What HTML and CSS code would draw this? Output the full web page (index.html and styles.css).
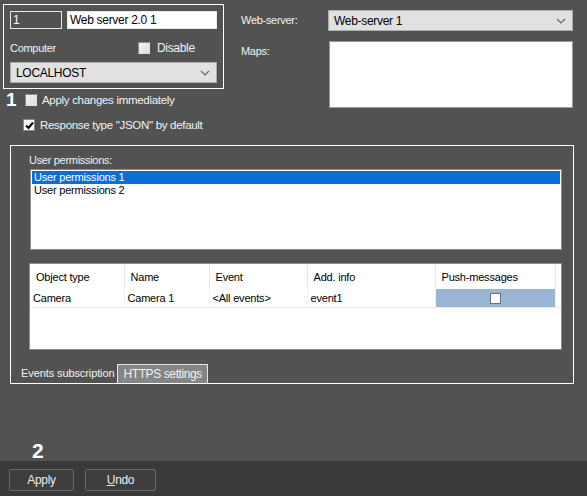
FILE: index.html
```html
<!DOCTYPE html>
<html lang="en">

<head>
    <meta charset="UTF-8">
    <title>Web server</title>
    <link rel="stylesheet" href="styles.css">
</head>

<body>

    <div class="content">
        <div class="top">
            <div class="left">
                <div class="server-box">
                    <div class="row">
                        <div class="field id-field">1</div>
                        <div class="field name-field">Web server 2.0 1</div>
                    </div>
                    <div class="row computer-row">
                        <span class="label">Computer</span>
                        <span class="check light"></span>
                        <span class="label">Disable</span>
                    </div>
                    <div class="select host-select">
                        <span>LOCALHOST</span>
                        <svg width="10" height="6" viewBox="0 0 10 6"><polyline points="1,1 5,5 9,1" fill="none" stroke="#666" stroke-width="1.2"/></svg>
                    </div>
                </div>

                <div class="check-row first">
                    <span class="marker">1</span>
                    <span class="check light"></span>
                    <span class="label">Apply changes immediately</span>
                </div>
                <div class="check-row second">
                    <span class="check checked">
                        <svg width="9" height="9" viewBox="0 0 9 9"><polyline points="1,4.5 3.5,7 8,1.5" fill="none" stroke="#000" stroke-width="2"/></svg>
                    </span>
                    <span class="label">Response type "JSON" by default</span>
                </div>
            </div>

            <div class="right">
                <span class="label">Web-server:</span>
                <div class="select server-select">
                    <span>Web-server 1</span>
                    <svg width="10" height="6" viewBox="0 0 10 6"><polyline points="1,1 5,5 9,1" fill="none" stroke="#666" stroke-width="1.2"/></svg>
                </div>
                <span class="label">Maps:</span>
                <div class="maps-box"></div>
            </div>
        </div>

        <div class="group">
            <div class="perm-label">User permissions:</div>
            <div class="listbox">
                <div class="list-item selected">User permissions 1</div>
                <div class="list-item">User permissions 2</div>
            </div>

            <div class="grid-box">
                <table>
                    <thead>
                        <tr>
                            <th class="c1">Object type</th>
                            <th class="c2">Name</th>
                            <th class="c3">Event</th>
                            <th class="c4">Add. info</th>
                            <th class="c5">Push-messages</th>
                            <th></th>
                        </tr>
                    </thead>
                    <tbody>
                        <tr>
                            <td>Camera</td>
                            <td>Camera 1</td>
                            <td>&lt;All events&gt;</td>
                            <td>event1</td>
                            <td class="push"><span class="cell-check"></span></td>
                            <td class="empty"></td>
                        </tr>
                    </tbody>
                </table>
            </div>

            <div class="tabs">
                <span class="tab">Events subscription</span>
                <span class="tab active">HTTPS settings</span>
            </div>
        </div>

        <div class="marker two">2</div>
    </div>

    <div class="footer">
        <button class="btn">Apply</button>
        <button class="btn undo"><u>U</u>ndo</button>
    </div>

</body>

</html>
```

FILE: styles.css
```css
* {
    margin: 0;
    padding: 0;
    box-sizing: border-box;
    font-family: 'Liberation Sans', Arial, sans-serif;
}

body {
    background-color: #525252;
    width: 587px;
    height: 496px;
    display: flex;
    flex-direction: column;
    color: #f2f2f2;
    font-size: 11px;
    letter-spacing: -0.3px;
    overflow: hidden;
}

.content {
    flex: 1;
    display: flex;
    flex-direction: column;
}

.top {
    display: flex;
}

.left {
    width: 221px;
    margin-left: 3px;
    margin-top: 4px;
}

.server-box {
    border: 1px solid #fff;
    height: 85px;
    padding: 6px 6px 0 6px;
}

.row {
    display: flex;
    align-items: center;
}

.field {
    height: 18px;
    border: 1px solid #e8e8e8;
    padding: 1px 2px 0;
    font-size: 12px;
}

.id-field {
    width: 52px;
    color: #fff;
}

.name-field {
    width: 150px;
    margin-left: 5px;
    background: #fff;
    color: #000;
}

.computer-row {
    margin-top: 13px;
    height: 12px;
}

.computer-row .check {
    margin-left: 82px;
    margin-right: 7px;
}

.computer-row .label:last-child {
    font-size: 12px;
}

.check {
    width: 12px;
    height: 12px;
    display: inline-flex;
    align-items: center;
    justify-content: center;
    flex-shrink: 0;
}

.check.light {
    border: 1px solid #8a8a8a;
    border-right-color: #e0e0e0;
    border-bottom-color: #e0e0e0;
    background: linear-gradient(135deg, #f4f4f4, #dcdcdc);
}

.check.checked {
    border: 1px solid #8a8a8a;
    background: #fff;
}

.select {
    height: 21px;
    background: #e1e1e1;
    border: 1px solid #adadad;
    color: #000;
    font-size: 12px;
    display: flex;
    align-items: center;
    justify-content: space-between;
    padding: 0 6px 0 5px;
}

.host-select {
    width: 207px;
    margin-top: 8px;
}

.check-row {
    display: flex;
    align-items: center;
}

.check-row.first {
    margin-top: 4px;
    height: 14px;
}

.check-row.first .check {
    margin-left: 6px;
}

.check-row.second {
    margin-top: 12px;
    margin-left: 20px;
    height: 12px;
}

.check-row .label {
    margin-left: 5px;
    font-size: 11.5px;
}

.label {
    font-size: 11px;
    white-space: nowrap;
}

.marker {
    font-weight: bold;
    font-size: 19px;
    color: #fff;
    letter-spacing: 0;
    line-height: 14px;
    width: 13px;
    margin-left: 3px;
}

.right {
    margin-left: 17px;
    margin-top: 10px;
    display: grid;
    grid-template-columns: 87px 245px;
    row-gap: 10px;
    align-content: start;
}

.right .label {
    padding-top: 4px;
}

.maps-box {
    height: 67px;
    margin-left: 1px;
    background: #fff;
    border: 1px solid #9a9a9a;
}

.group {
    margin: 14px 0 0 10px;
    width: 564px;
    height: 239px;
    border: 1px solid #fff;
    padding: 8px 0 0 18px;
    display: flex;
    flex-direction: column;
}

.perm-label {
    font-size: 11px;
    height: 14px;
}

.listbox {
    margin: 1px 0 0 1px;
    width: 532px;
    height: 81px;
    background: #fff;
    border: 1px solid #8c8c8c;
    padding: 1px;
    color: #000;
}

.list-item {
    height: 13px;
    line-height: 13px;
    padding-left: 2px;
    font-size: 11px;
    letter-spacing: -0.2px;
}

.list-item.selected {
    background: #0a6fd4;
    color: #fff;
}

.grid-box {
    margin-top: 13px;
    width: 533px;
    height: 87px;
    background: #fff;
    border: 1px solid #8c8c8c;
    color: #000;
}

table {
    border-collapse: collapse;
    table-layout: fixed;
    width: 531px;
}

th,
td {
    font-size: 11px;
    font-weight: normal;
    text-align: left;
    letter-spacing: -0.2px;
    white-space: nowrap;
}

th {
    height: 25px;
    padding-left: 6px;
    border-right: 1px solid #e6e6e6;
}

td {
    height: 18px;
    padding-left: 3px;
    border-bottom: 1px solid #ececec;
    border-right: 1px solid #f2f2f2;
}

th:last-child {
    border-right: none;
}

.c1 { width: 94px; }
.c2 { width: 85px; }
.c3 { width: 98px; }
.c4 { width: 128px; }
.c5 { width: 120px; }

td.push {
    background: #9ab4d4;
    text-align: center;
    padding: 0;
}

td.empty {
    border-right: none;
}

.cell-check {
    display: inline-block;
    width: 11px;
    height: 11px;
    background: #fff;
    border: 1px solid #707070;
    vertical-align: middle;
}

.tabs {
    margin-top: auto;
    margin-left: -11px;
    display: flex;
    align-items: flex-end;
}

.tab {
    font-size: 11px;
    height: 19px;
    line-height: 19px;
    padding: 0 3px;
    letter-spacing: -0.1px;
}

.tab.active {
    background: #858585;
    border: 1px solid #e8e8e8;
    border-bottom: none;
    line-height: 18px;
    padding: 0 5px;
    margin-left: 0;
    font-size: 12px;
    letter-spacing: -0.4px;
}

.marker.two {
    margin: auto 0 2px 32px;
    font-size: 21px;
    line-height: 16px;
}

.footer {
    height: 35px;
    background: #3a3a3a;
    display: flex;
    align-items: flex-start;
    padding: 8px 0 0 9px;
    gap: 11px;
}

.btn {
    height: 22px;
    width: 65px;
    background: #3e3e3e;
    border: 1px solid #6b6b6b;
    border-radius: 2px;
    color: #ececec;
    font-size: 12px;
    letter-spacing: -0.3px;
}

.btn.undo {
    width: 71px;
}
```
